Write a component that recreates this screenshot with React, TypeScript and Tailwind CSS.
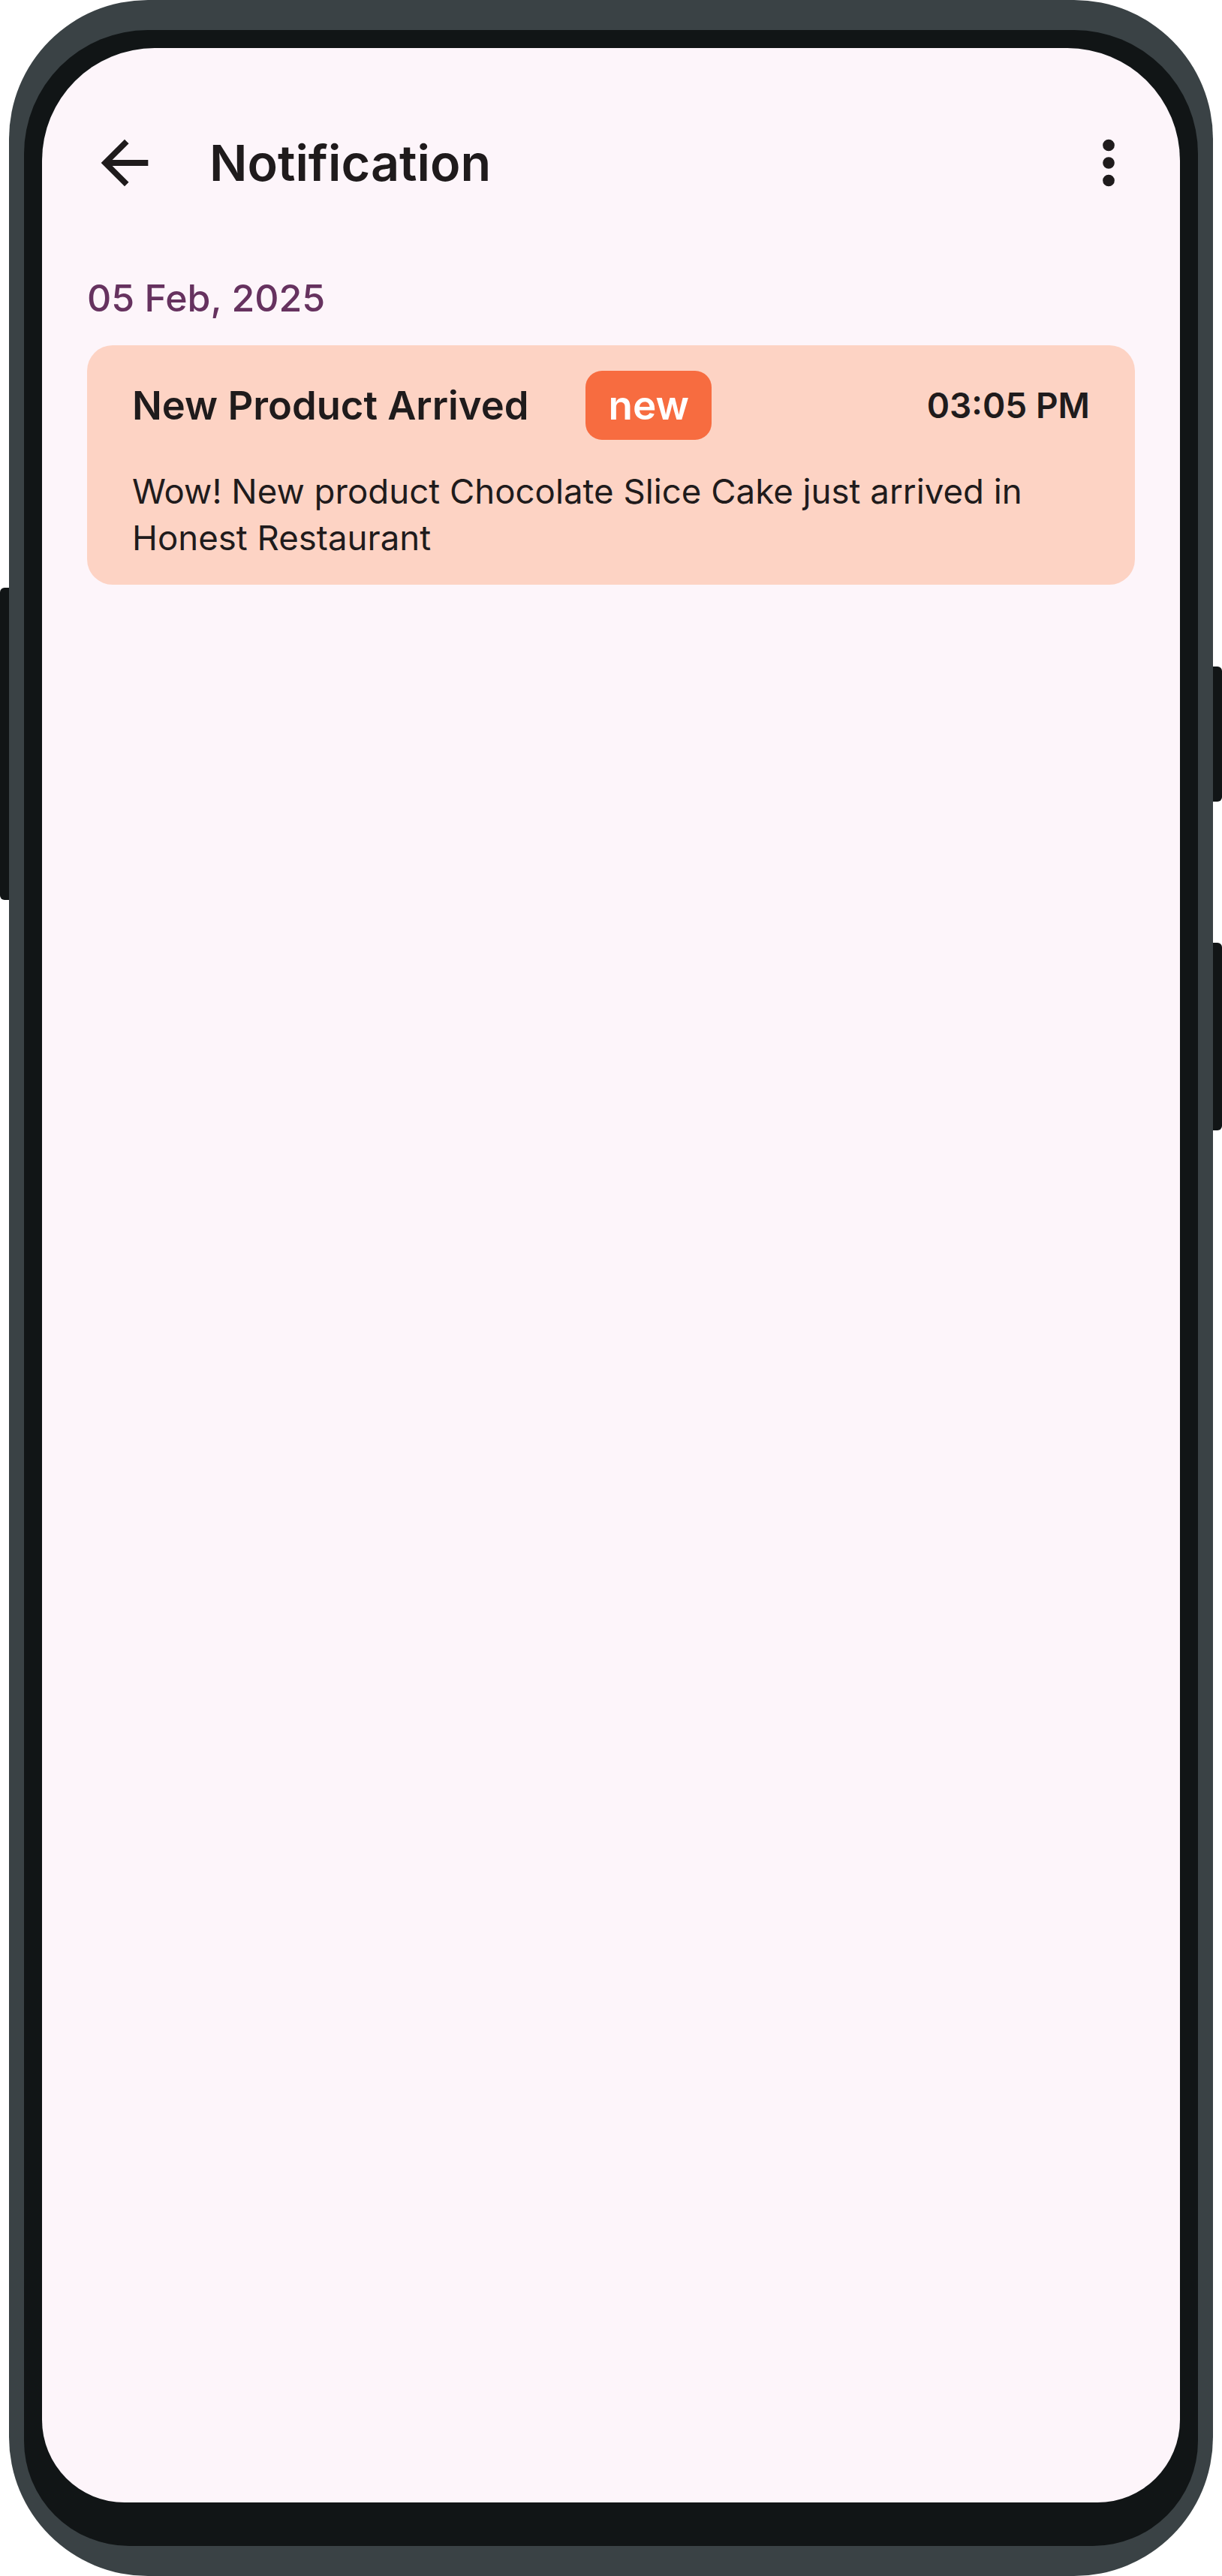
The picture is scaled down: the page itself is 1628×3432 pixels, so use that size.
import React from 'react';

interface NotificationItem {
  id: string;
  title: string;
  message: string;
  time: string;
  isNew: boolean;
}

interface NotificationGroup {
  date: string;
  items: NotificationItem[];
}

const groups: NotificationGroup[] = [
  {
    date: '05 Feb, 2025',
    items: [
      {
        id: '1',
        title: 'New Product Arrived',
        message: 'Wow! New product Chocolate Slice Cake just arrived in Honest Restaurant',
        time: '03:05 PM',
        isNew: true,
      },
    ],
  },
];

const ArrowBackIcon = () => (
  <svg width="94" height="94" viewBox="0 0 24 24" fill="#1f1b1c">
    <path d="M20 11H7.83l5.59-5.59L12 4l-8 8 8 8 1.41-1.41L7.83 13H20v-2z" />
  </svg>
);

const MoreVertIcon = () => (
  <svg width="94" height="94" viewBox="0 0 24 24" fill="#1f1b1c">
    <circle cx="12" cy="6" r="2" />
    <circle cx="12" cy="12" r="2" />
    <circle cx="12" cy="18" r="2" />
  </svg>
);

const NotificationCard: React.FC<{ item: NotificationItem }> = ({ item }) => (
  <div className="bg-[#fdd3c4] rounded-[34px] px-[60px] pt-[34px] pb-[31px]">
    <div className="flex items-center h-[92px]">
      <span className="text-[52.5px] font-semibold text-[#1f1b1c] leading-none">{item.title}</span>
      {item.isNew ? (
        <span className="ml-[76px] h-[92px] px-[30px] flex items-center rounded-[22px] bg-[#f76c40] text-white text-[53px] font-semibold leading-none">
          new
        </span>
      ) : null}
      <span className="ml-auto text-[46px] font-semibold text-[#1f1b1c] leading-none">{item.time}</span>
    </div>
    <p className="mt-[38px] text-[45.6px] leading-[62px] text-[#1f1b1c]">{item.message}</p>
  </div>
);

const NotificationScreen = () => (
  <div className="flex-1 bg-[#fdf5fa] rounded-t-[150px] rounded-b-[110px] overflow-hidden pt-[93px]">
    {/* App bar */}
    <div className="flex items-center h-[120px] pl-[63px] pr-[48px]">
      <button className="w-[94px] h-[94px] flex items-center justify-center">
        <ArrowBackIcon />
      </button>
      <h1 className="ml-[66px] text-[66.5px] font-semibold text-[#1f1b1c] leading-none">Notification</h1>
      <button className="ml-auto w-[94px] h-[94px] flex items-center justify-center">
        <MoreVertIcon />
      </button>
    </div>

    <div className="px-[60px] pt-[90px]">
      {groups.map((group) => (
        <div key={group.date}>
          <div className="text-[50px] leading-[60px] font-medium text-[#66325f]">{group.date}</div>
          <div className="mt-[33px] flex flex-col gap-[30px]">
            {group.items.map((item) => (
              <NotificationCard key={item.id} item={item} />
            ))}
          </div>
        </div>
      ))}
    </div>
  </div>
);

export default function App() {
  return (
    <div
      className="w-[1628px] h-[3432px] bg-white flex"
      style={{ fontFamily: 'Inter, "Noto Sans", sans-serif' }}
    >
      {/* left side button */}
      <div className="w-[12px] pt-[783px]">
        <div className="h-[416px] bg-[#111516] rounded-l-[6px]" />
      </div>

      {/* phone body */}
      <div className="w-[1604px] h-full bg-[#3a4245] rounded-[185px] pt-[40px] px-[20px] pb-[40px] flex flex-col">
        <div className="flex-1 bg-[#111516] rounded-t-[165px] rounded-b-[140px] pt-[24px] px-[24px] pb-[58px] flex">
          <NotificationScreen />
        </div>
      </div>

      {/* right side buttons */}
      <div className="w-[12px] pt-[888px]">
        <div className="h-[180px] bg-[#111516] rounded-r-[6px]" />
        <div className="mt-[188px] h-[250px] bg-[#111516] rounded-r-[6px]" />
      </div>
    </div>
  );
}
